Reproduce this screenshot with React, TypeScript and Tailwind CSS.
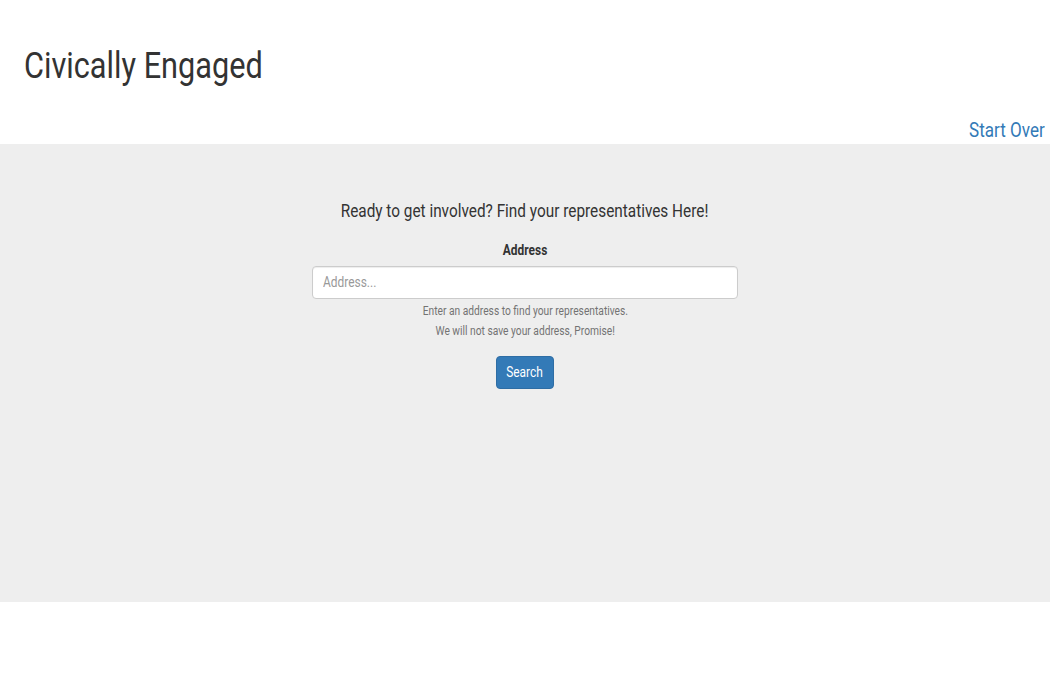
const squeeze = 'inline-block scale-x-[0.853]';

export default function App() {
  return (
    <div className="min-h-[700px] bg-white font-['Roboto',sans-serif] text-[#333]">
      <header className="px-6 pt-[44px]">
        <h1 className="text-[36px] font-normal leading-[44px]">
          <span className={`${squeeze} origin-left`}>Civically Engaged</span>
        </h1>
      </header>
      <div className="flex justify-end pr-[5px] pt-[28px]">
        <a href="#" className="text-[20px] leading-[28px] text-[#337ab7]">
          <span className={`${squeeze} origin-right`}>Start Over</span>
        </a>
      </div>
      <section className="flex h-[458px] flex-col items-center bg-[#eeeeee] pt-[55px]">
        <h2 className="text-[18px] leading-[24px]">
          <span className={squeeze}>Ready to get involved? Find your representatives Here!</span>
        </h2>
        <label className="mt-[17px] text-[14px] font-bold leading-[20px]">
          <span className={squeeze}>Address</span>
        </label>
        <div className="mt-[6px] flex h-[33px] w-[426px] items-center rounded-[4px] border border-[#ccc] bg-white px-[10px] shadow-[inset_0_1px_1px_rgba(0,0,0,0.075)]">
          <span className={`${squeeze} origin-left text-[14px] text-[#999]`}>Address...</span>
        </div>
        <p className="mt-[2px] text-[12px] leading-[20px] text-[#737373]">
          <span className={squeeze}>Enter an address to find your representatives.</span>
        </p>
        <p className="text-[12px] leading-[20px] text-[#737373]">
          <span className={squeeze}>We will not save your address, Promise!</span>
        </p>
        <button className="mt-[15px] flex h-[33px] w-[58px] items-center justify-center rounded-[4px] border border-[#2e6da4] bg-[#337ab7] text-[14px] text-white">
          <span className={squeeze}>Search</span>
        </button>
      </section>
    </div>
  );
}
